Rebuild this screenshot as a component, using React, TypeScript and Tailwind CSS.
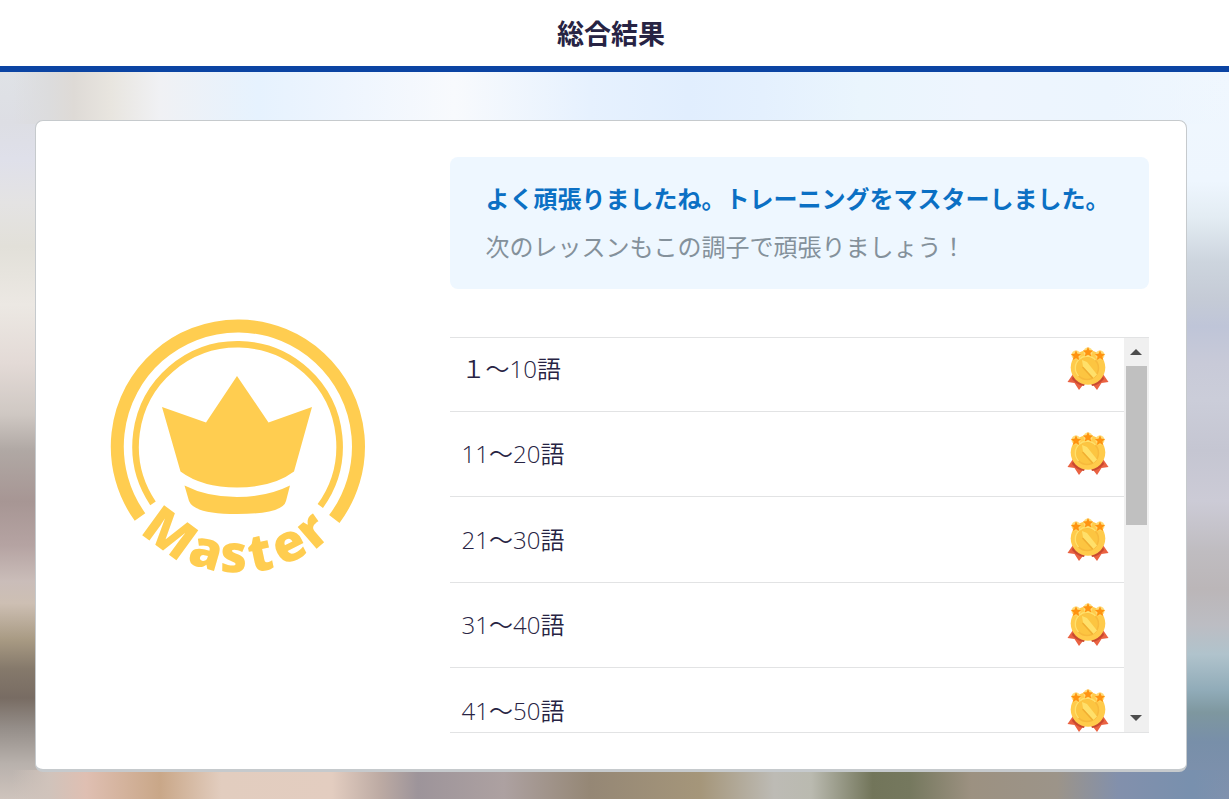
// src/pages/TotalResult.tsx
import React, { useRef } from 'react';

const sections = ['１〜10語', '11〜20語', '21〜30語', '31〜40語', '41〜50語', '51〜60語', '61〜70語', '71〜80語', '81〜90語', '91〜100語'];

const MasterBadge: React.FC = () => (
  <svg viewBox="-1 -2 256 256" className="w-64 shrink-0 overflow-visible" fill="#ffcd50" role="img" aria-label="Master">
    {/* Rings */}
    <path d="M30 198A120.600 120.600 0 1 1 224.300 200" fill="none" stroke="#ffcd50" strokeWidth="13" />
    <path d="M43 184.300A102 102 0 1 1 210.300 187" fill="none" stroke="#ffcd50" strokeWidth="6.600" />
    {/* Crown */}
    <path d="M127 57L158.500 103.500L202 88L184 152.500Q163 168.500 127 168.500Q92 168.500 70.500 152.500L52 88L96 103.500Z" />
    <path d="M74.500 166.500Q97 178 127 178Q157 178 180 166.500L176 182Q173 195 127 195Q84 195 79 182Z" />
    {/* Title along the lower edge */}
    <text
      className="font-['Open_Sans','Noto_Sans',sans-serif] text-[52px] font-extrabold"
      x="29 76 110 142 172 204"
      y="214 244 253 254 248 232"
      rotate="36 16 1 -12 -27 -41"
    >
      Master
    </text>
  </svg>
);

const STAR = 'M0 -4.500L1.300 -1.500L4.500 -1.200L2.100 0.900L2.800 4L0 2.400L-2.800 4L-2.100 0.900L-4.500 -1.200L-1.300 -1.500Z';

const Medal: React.FC = () => (
  <svg viewBox="0 0 42 44" className="h-11 w-[42px] shrink-0" role="img" aria-label="メダル">
    <path d="M6 27L0.500 35L7.500 36L12 43L19 34Z" fill="#ea6242" />
    <path d="M36 27L41.500 35L34.500 36L30 43L23 34Z" fill="#ea6242" />
    <path d="M6 29L5 32Q10 38 17 39L19 34Z" fill="#c9482f" />
    <path d="M36 29L37 32Q32 38 25 39L23 34Z" fill="#c9482f" />
    <circle cx="21" cy="20.500" r="17.300" fill="#ffcb4b" />
    <g fill="#ffdc78">
      <circle cx="9" cy="8" r="4.500" />
      <circle cx="21" cy="5" r="4.500" />
      <circle cx="33" cy="8" r="4.500" />
    </g>
    <circle cx="20" cy="21" r="11.500" fill="#fcc541" stroke="#f7b93c" strokeWidth="1.500" />
    <path d="M11.500 29A11.500 11.500 0 0 1 28.500 13" fill="none" stroke="#ffe06a" strokeWidth="1.500" />
    <path d="M15 13L20 15L30 27.500L26.500 31L16 19.500Z" fill="#ffe06a" />
    <path d="M16 19.500L26.500 31L25 31.500L15 20.500Z" fill="#f0ae32" />
    <g fill="#ff9310">
      <path d={STAR} transform="translate(9 8.500) scale(1.150)" />
      <path d={STAR} transform="translate(21 5) scale(1.150)" />
      <path d={STAR} transform="translate(33 8.500) scale(1.150)" />
    </g>
  </svg>
);

const TotalResult: React.FC = () => {
  const listRef = useRef<HTMLUListElement>(null);
  const scrollList = (top: number) => listRef.current?.scrollBy({ top });

  return (
    <div className="flex min-h-screen flex-col font-['Open_Sans','Noto_Sans_CJK_JP',sans-serif] text-[#272343]">
      <header className="h-[72px] border-b-6 border-[#0b44a3] bg-white pr-[7px] text-center">
        <h1 className="text-[27px] leading-[68px] font-bold">総合結果</h1>
      </header>

      <main className="flex-1 bg-[linear-gradient(90deg,transparent_1%,#dcdcdd_4%,#dedad6_6%,#e8e5df_9%,#f0f1f4_13%,#e6f2fe_21%,#eef5fe_28%,#f8fafd_37%,#e6f1fe_48%,#e1eefe_56%,#e4f0fe_62%,#eaf5fd_70%,#eef5fe_80%,#ecf5fe_90%,transparent_100%),linear-gradient(90deg,transparent_1%,#d0c3bb_4%,#dfbfb2_7%,#c9a788_13%,#e2cdbf_18%,#e3cdc0_27%,#bcaaa3_31%,#9d949a_34%,#ada1a1_41%,#958775_48%,#a5967a_57%,#bdbbb5_63%,#babab0_66%,#72755a_71%,#75785e_74%,#9c9181_79%,#9c9489_86%,#8290ac_91%,#7890ae_97%,transparent_100%),linear-gradient(180deg,#dfe2e6_0%,#dddee4_7%,#dfe0ea_12%,#e4e3e3_18%,#e2e0d9_24%,#ece8e3_32%,#e3dad6_40%,#cfc8c3_47%,#b0a8a4_52%,#a79694_59%,#b5a3a2_65%,#cabdb9_70%,#cdbfb3_73%,#a89a83_78%,#85796b_82%,#786c63_86%,#948d88_90%,#b8b1ac_95%,#cfc4bd_100%),linear-gradient(180deg,#f0f7fe_0%,#eef6fe_15%,#e3ecf3_20%,#cdd5de_26%,#c5cbd6_31%,#bfc5d8_35%,#c8cad8_40%,#cbcdd9_45%,#c5c6d2_52%,#cccbd6_59%,#bfbcc0_66%,#bbb6b8_71%,#bcbdc3_76%,#b0c3cc_80%,#90abb8_85%,#7e979f_88%,#788fa9_92%,#8091ae_100%)] bg-[size:100%_52px,100%_30px,50%_100%,50%_100%] bg-[position:top,bottom,left,right] bg-no-repeat pt-12 pr-[42px] pb-7 pl-[35px]">
        <div className="flex rounded-lg border border-b-3 border-[#c6cacd] bg-white px-[37px] py-9">
          <div className="flex w-[35%] items-center justify-center pr-12">
            <MasterBadge />
          </div>

          <div className="w-[65%]">
            {/* Message */}
            <div className="rounded-lg bg-[#eef7ff] px-9 py-6 text-2xl leading-9">
              <p className="font-bold text-[#0b70c4]">よく頑張りましたね。トレーニングをマスターしました。</p>
              <p className="mt-3 text-[#84919b]">次のレッスンもこの調子で頑張りましょう！</p>
            </div>

            {/* Results */}
            <div className="mt-12 flex h-[396px] border-y border-[#e2e3e4]">
              <ul ref={listRef} className="flex-1 overflow-y-auto [scrollbar-width:none]">
                {sections.map((label) => (
                  <li
                    key={label}
                    className="flex items-center justify-between border-b border-[#e2e3e4] pt-[21px] pr-[15px] pb-5 pl-3 text-2xl leading-9 font-[350] first:pt-[9px] even:pt-5"
                  >
                    <span>{label}</span>
                    <Medal />
                  </li>
                ))}
              </ul>
              <div className="flex w-[25px] flex-col bg-[#f0f0f0]">
                <button type="button" aria-label="上へ" className="flex h-7 items-center justify-center" onClick={() => scrollList(-85)}>
                  <svg viewBox="0 0 12 6" className="w-3" fill="#4d4d4d">
                    <path d="M0 6L6 0L12 6Z" />
                  </svg>
                </button>
                <div className="flex-1 px-[2px]">
                  <div className="h-[159px] bg-[#c0c0c0]" />
                </div>
                <button type="button" aria-label="下へ" className="flex h-7 items-center justify-center" onClick={() => scrollList(85)}>
                  <svg viewBox="0 0 12 6" className="w-3" fill="#4d4d4d">
                    <path d="M0 0L6 6L12 0Z" />
                  </svg>
                </button>
              </div>
            </div>
          </div>
        </div>
      </main>
    </div>
  );
};

export default TotalResult;
